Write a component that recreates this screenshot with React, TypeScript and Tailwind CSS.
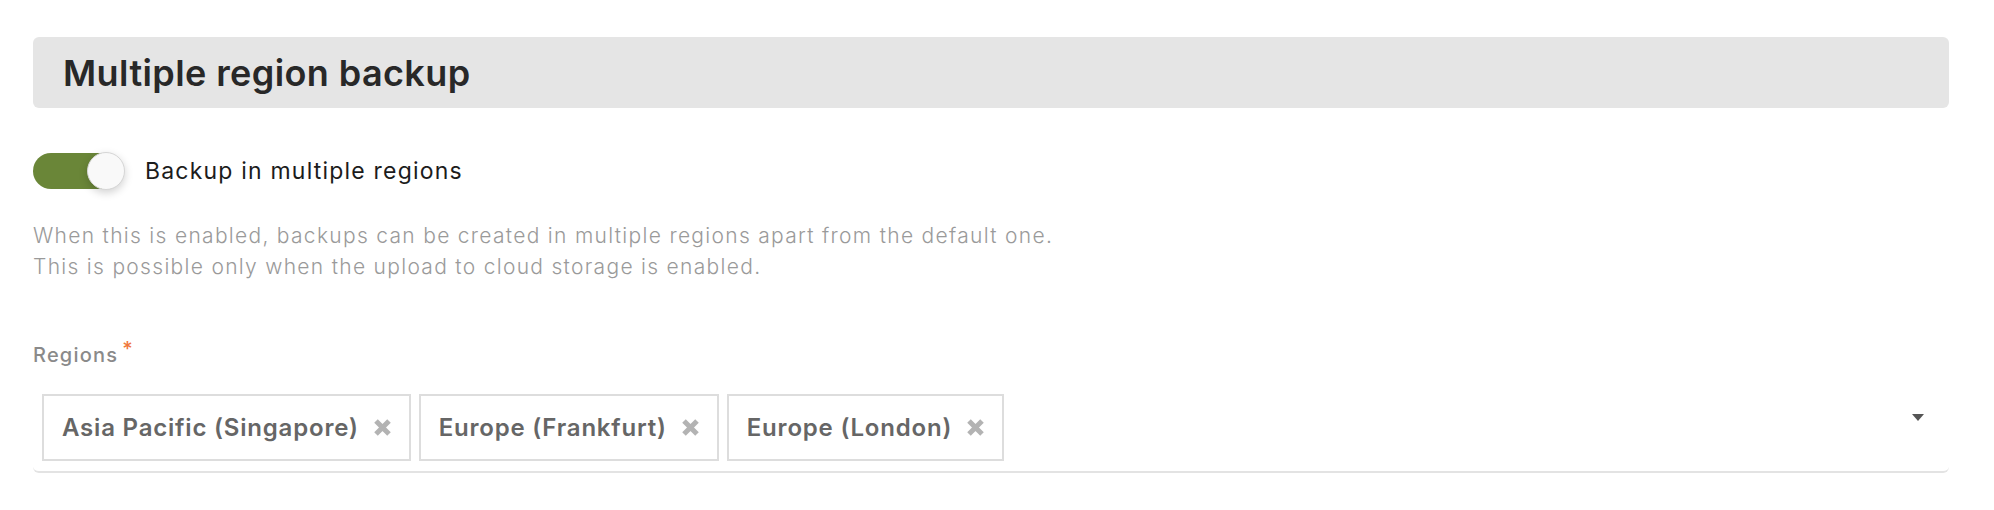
import React from "react";

const regions = ["Asia Pacific (Singapore)", "Europe (Frankfurt)", "Europe (London)"];

function RemoveIcon() {
  return (
    <svg width="19" height="19" viewBox="0 0 19 19" className="shrink-0">
      <path d="M3 3 L16 16 M16 3 L3 16" stroke="#b3b3b3" strokeWidth="5" strokeLinecap="butt" />
    </svg>
  );
}

function Chip({ label }: { label: string }) {
  return (
    <div className="flex h-[67px] items-center gap-[14px] border-2 border-[#dddddd] bg-white pl-[18px] pr-[17px]">
      <span className="text-[24px] font-semibold tracking-[0.8px] text-[#666666]">{label}</span>
      <RemoveIcon />
    </div>
  );
}

export default function App() {
  return (
    <main
      className="min-h-[510px] bg-white pl-[33px] pr-[45px] pt-[37px]"
      style={{ fontFamily: "Inter, 'Noto Sans', sans-serif" }}
    >
      <div className="flex h-[71px] items-center rounded-md bg-[#e5e5e5] pl-[30px]">
        <h1 className="text-[36px] font-semibold tracking-[0.4px] text-[#282828]">Multiple region backup</h1>
      </div>

      <div className="mt-[45px] flex items-center gap-[22px]">
        <div className="relative h-9 w-[90px] rounded-full bg-[#6a8638]">
          <div className="absolute -right-[2px] -top-[1px] size-[38px] rounded-full border border-[#d6d6d6] bg-[#f9f9f9] shadow-[0_3px_8px_rgba(0,0,0,0.18)]" />
        </div>
        <span className="text-[23px] tracking-[1.2px] text-[#1c1c1c]">Backup in multiple regions</span>
      </div>

      <div className="mt-[31px] text-[21px] font-light leading-[31px] tracking-[1.3px] text-[#9a9a9a]">
        <p>When this is enabled, backups can be created in multiple regions apart from the default one.</p>
        <p>This is possible only when the upload to cloud storage is enabled.</p>
      </div>

      <div className="mt-[59px] flex items-start text-[20px] font-medium leading-[28px] tracking-[1.2px] text-[#8a8a8a]">
        <span>Regions</span>
        <span className="ml-[4px] -mt-[6px] text-[20px] text-[#f0783c]">*</span>
      </div>

      <div className="mt-[17px] flex items-center rounded-b-md border-b-2 border-[#e3e3e3] pb-[10px] pl-[9px] pr-[25px] pt-[8px]">
        <div className="flex flex-1 gap-[8px]">
          {regions.map((r) => (
            <Chip key={r} label={r} />
          ))}
        </div>
        <svg width="12" height="7" viewBox="0 0 12 7" className="-mt-[20px]">
          <path d="M0 0 H12 L6 7 Z" fill="#555555" />
        </svg>
      </div>
    </main>
  );
}
